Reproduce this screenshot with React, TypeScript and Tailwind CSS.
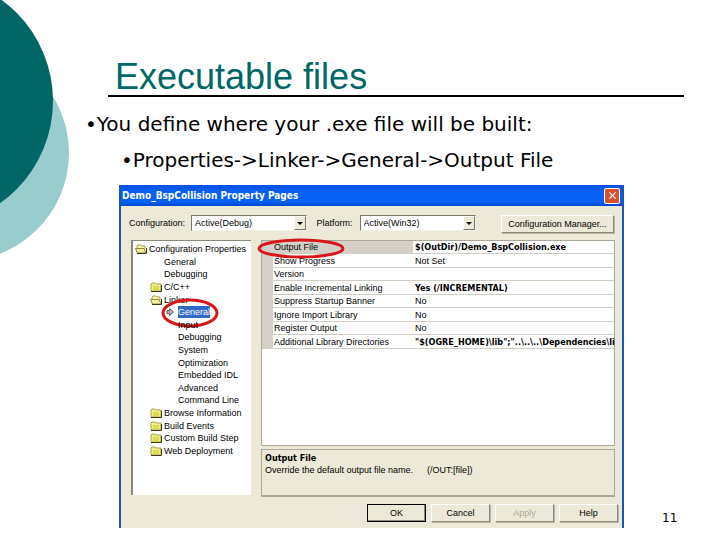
import { IoClose } from "react-icons/io5";

const treeItems = [
      { label: "Configuration Properties", level: 0, icon: "open" },
      { label: "General", level: 1, icon: "" },
      { label: "Debugging", level: 1, icon: "" },
      { label: "C/C++", level: 1, icon: "closed" },
      { label: "Linker", level: 1, icon: "open" },
      { label: "General", level: 2, icon: "arrow" },
      { label: "Input", level: 2, icon: "" },
      { label: "Debugging", level: 2, icon: "" },
      { label: "System", level: 2, icon: "" },
      { label: "Optimization", level: 2, icon: "" },
      { label: "Embedded IDL", level: 2, icon: "" },
      { label: "Advanced", level: 2, icon: "" },
      { label: "Command Line", level: 2, icon: "" },
      { label: "Browse Information", level: 1, icon: "closed" },
      { label: "Build Events", level: 1, icon: "closed" },
      { label: "Custom Build Step", level: 1, icon: "closed" },
      { label: "Web Deployment", level: 1, icon: "closed" },
];

const settings = [
      { name: "Output File", value: "$(OutDir)/Demo_BspCollision.exe", bold: true },
      { name: "Show Progress", value: "Not Set", bold: false },
      { name: "Version", value: "", bold: false },
      { name: "Enable Incremental Linking", value: "Yes (/INCREMENTAL)", bold: true },
      { name: "Suppress Startup Banner", value: "No", bold: false },
      { name: "Ignore Import Library", value: "No", bold: false },
      { name: "Register Output", value: "No", bold: false },
      { name: "Additional Library Directories", value: '"$(OGRE_HOME)\\lib";"..\\..\\..\\Dependencies\\li', bold: true },
];

const indent = ["pl-[2px]", "pl-[17px]", "pl-[31px]"];

const boldText = "font-bold font-['DejaVu_Sans_Condensed','DejaVu_Sans',sans-serif]";

function TreeIcon({ kind }: { kind: string }) {
      if (kind === "closed") {
            return (
                  <svg className="shrink-0" width="12" height="10" viewBox="0 0 12 10">
                        <path d="M1 9V2l1-1h3l1 1h5v7z" fill="#f0ee8c" stroke="#a8a04a" />
                        <path d="M3 4h6v4H3z" fill="#d9dc4c" />
                        <path d="M1 9.500h10.500V3" fill="none" stroke="#3d3a18" />
                  </svg>
            );
      }
      if (kind === "open") {
            return (
                  <svg className="shrink-0" width="12" height="10" viewBox="0 0 12 10">
                        <path d="M2 8V2l1-1h3l1 1h3v3" fill="#f6f4b8" stroke="#a8a04a" />
                        <path d="M2.500 9L.5 4.500H9L11 9z" fill="#f4f1a4" stroke="#8a8438" />
                        <path d="M2 9.500h9.500V4" fill="none" stroke="#3d3a18" />
                  </svg>
            );
      }
      if (kind === "arrow") {
            return (
                  <svg className="shrink-0" width="12" height="10" viewBox="0 0 12 10">
                        <path d="M3 3.500h2.500V1.500L9.500 5 5.500 8.500V6.500H3z" fill="#b4b4b4" stroke="#5c5c5c" />
                  </svg>
            );
      }
      return <span className="w-3 shrink-0" />;
}

function Combo({ id, label, value, labelClass }: { id: string; label: string; value: string; labelClass: string }) {
      return (
            <div className="flex items-center">
                  <label htmlFor={id} className={labelClass}>{label}</label>
                  <div className="relative w-[116px] h-4 bg-white border border-t-[#77766c] border-l-[#77766c] border-r-[#f4f2e8] border-b-[#f4f2e8]">
                        <select id={id} className="appearance-none block w-full h-full pl-[3px] leading-3 bg-white">
                              <option>{value}</option>
                        </select>
                        <span className="absolute right-0 top-0 w-3 h-[14px] flex items-center justify-center pointer-events-none bg-[#ece9d8] border border-t-white border-l-white border-r-[#77766c] border-b-[#77766c]">
                              <svg width="6" height="3" viewBox="0 0 6 3"><path d="M0 0h6L3 3z" fill="#000" /></svg>
                        </span>
                  </div>
            </div>
      );
}

function DialogButton({ label, look }: { label: string; look: string }) {
      return (
            <button disabled={label === "Apply"} className={"w-[59px] h-[18px] leading-3 border " + look}>{label}</button>
      );
}

const raised = "border-t-white border-l-white border-r-[#8a887a] border-b-[#8a887a] shadow-[1px_1px_0_#b9b6a4]";

function PropertyDialog() {
      return (
            <section className="flex-1 min-w-0 border-x-2 border-[#1c55b4] bg-[#ece9d8] text-[9px] leading-3 text-black font-['Liberation_Sans',sans-serif]">
                  <header className="h-[21px] pl-px pr-[2px] flex items-center justify-between bg-[linear-gradient(#0a4fe0,#0560f5_30%,#0560f5_80%,#0347c8)]">
                        <h2 className={"text-[10px] text-white " + boldText}>Demo_BspCollision Property Pages</h2>
                        <button aria-label="Close" className="w-4 h-4 flex items-center justify-center rounded-[2px] border border-white bg-[#d9502f] text-white">
                              <IoClose size={13} />
                        </button>
                  </header>

                  <div className="pt-[9px] pl-2 pr-2 flex items-start justify-between">
                        <Combo id="configuration" label="Configuration:" value="Active(Debug)" labelClass="w-[62px]" />
                        <Combo id="platform" label="Platform:" value="Active(Win32)" labelClass="w-[43px]" />
                        <button className={"w-[113px] h-[18px] ml-4 border " + raised}>Configuration Manager...</button>
                  </div>

                  <div className="mt-[7px] pl-[10px] pr-[7px] flex gap-[10px]">
                        <nav className="w-[120px] h-[255px] shrink-0 bg-white border-t border-l-2 border-[#8a887a]">
                              <ul className="h-[214px] mt-[2px] flex flex-col">
                                    {treeItems.map((item, i) => (
                                          <li key={i} className={"relative flex-1 min-h-0 flex items-center gap-[2px] whitespace-nowrap " + indent[item.level]}>
                                                <TreeIcon kind={item.icon} />
                                                {item.icon === "arrow" ? (
                                                      <>
                                                            <span className="w-8 bg-[#316ac5] text-white">{item.label}</span>
                                                            <svg className="absolute left-7 -top-2" width="58" height="30" viewBox="0 0 58 30">
                                                                  <ellipse cx="29" cy="15" rx="27" ry="13" fill="none" stroke="#d8161a" strokeWidth="3" />
                                                            </svg>
                                                      </>
                                                ) : (
                                                      <span>{item.label}</span>
                                                )}
                                          </li>
                                    ))}
                              </ul>
                        </nav>

                        <div className="flex-1 min-w-0">
                              <div className="relative h-[206px] bg-white border border-[#aca899]">
                                    <table className="w-full h-[108px] table-fixed border-collapse">
                                          <tbody>
                                                {settings.map((row, i) => (
                                                      <tr key={row.name} className="whitespace-nowrap">
                                                            <td className="w-[11px] p-0 bg-[#d4d0c8]"></td>
                                                            <th className={"w-[140px] p-0 pl-px text-left font-normal border-b border-[#d0cdc2] " + (i === 0 ? "bg-[#d4d0c8]" : "")}>{row.name}</th>
                                                            <td className={"p-0 pl-[2px] border-b border-[#d0cdc2] " + (row.bold ? boldText : "")}>{row.value}</td>
                                                      </tr>
                                                ))}
                                          </tbody>
                                    </table>
                                    <svg className="absolute -left-[5px] -top-[3px]" width="88" height="21" viewBox="0 0 88 21">
                                          <ellipse cx="44" cy="10.500" rx="42" ry="8.500" fill="none" stroke="#d8161a" strokeWidth="3" />
                                    </svg>
                              </div>
                              <div className="mt-[3px] h-[48px] pt-[2px] pl-[3px] border border-b-2 border-[#aca899]">
                                    <h3 className={boldText}>Output File</h3>
                                    <p>Override the default output file name.<span className="ml-[14px]">(/OUT:[file])</span></p>
                              </div>
                        </div>
                  </div>

                  <footer className="h-[31px] pt-[7px] pr-1 flex justify-end gap-[5px]">
                        <DialogButton label="OK" look="border-black shadow-[inset_-1px_-1px_0_#8a887a]" />
                        <DialogButton label="Cancel" look={raised} />
                        <DialogButton label="Apply" look={"text-[#aca899] " + raised} />
                        <DialogButton label="Help" look={raised} />
                  </footer>
            </section>
      );
}

export default function App() {
      return (
            <main className="relative min-h-screen overflow-hidden bg-white text-black font-['DejaVu_Sans',sans-serif]">
                  <svg className="absolute left-0 top-0" width="80" height="270" viewBox="0 0 80 270">
                        <circle cx="-39" cy="153" r="108" fill="#99cccc" />
                        <circle cx="-72" cy="101" r="125" fill="#006666" />
                  </svg>

                  <div className="relative pt-[59px]">
                        <h1 className="ml-[108px] mr-9 pl-[7px] border-b-2 border-black text-[36px] leading-9 text-[#006666] font-['Liberation_Sans',sans-serif]">Executable files</h1>

                        <ul className="mt-[9px] pl-[85px] text-[20px] leading-9">
                              <li>•You define where your .exe file will be built:</li>
                              <li className="pl-9">•Properties-&gt;Linker-&gt;General-&gt;Output File</li>
                        </ul>

                        <div className="mt-[7px] pl-[119px] flex items-end">
                              <PropertyDialog />
                              <p className="w-24 pl-[38px] text-[12px] leading-5">11</p>
                        </div>
                  </div>
            </main>
      );
}
